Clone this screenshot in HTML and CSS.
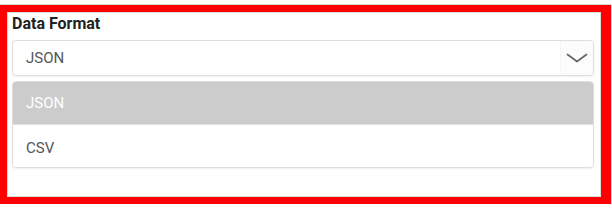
FILE: index.html
```html
<!DOCTYPE html>
<html lang="en">
<head>
    <meta charset="UTF-8">
    <meta name="viewport" content="width=device-width, initial-scale=1.0">
    <title>Data Format</title>
    <link rel="stylesheet" href="styles.css">
</head>
<body>
    <div class="frame">
        <!-- 字段标签 -->
        <label class="field-label">Data Format</label>

        <!-- 下拉框 -->
        <div class="select-box">
            <span class="select-value">JSON</span>
            <span class="select-toggle">
                <svg width="22" height="10" viewBox="0 0 22 10">
                    <polyline points="1.5,1.5 11,8.5 20.5,1.5" fill="none" stroke="#6a6a6a" stroke-width="1.8" stroke-linecap="round" stroke-linejoin="round"/>
                </svg>
            </span>
        </div>

        <!-- 选项列表 -->
        <ul class="option-list">
            <li class="option selected">JSON</li>
            <li class="option">CSV</li>
        </ul>
    </div>
</body>
</html>
```

FILE: styles.css
```css
* {
    box-sizing: border-box;
}
body {
    margin: 0;
    background-color: #fff;
    font-family: Roboto, "Liberation Sans", Arial, sans-serif;
    color: #333;
}

/* 红色外框 */
.frame {
    margin-top: 5px;
    width: 611px;
    height: 199px;
    border: 7px solid #ff0000;
    border-right-width: 10px;
    box-shadow: 0 0 0 1px #d6d6d6, inset 0 0 0 1px #dcdcdc;
    padding: 2px 7px 0 5px;
    display: flex;
    flex-direction: column;
}

.field-label {
    font-size: 16px;
    font-weight: bold;
    line-height: 19px;
    color: #222;
    margin-bottom: 7px;
}

/* 下拉框 */
.select-box {
    height: 36px;
    border: 1px solid #dedede;
    border-radius: 4px;
    display: flex;
    align-items: stretch;
    box-shadow: 0 1px 2px rgba(0, 0, 0, 0.06);
}
.select-value {
    flex-grow: 1;
    padding-left: 13px;
    display: flex;
    align-items: center;
    font-size: 15px;
    color: #555;
}
.select-toggle {
    width: 33px;
    display: flex;
    align-items: center;
    justify-content: center;
    border-left: 1px solid #f6f6f6;
    background-color: #fcfcfc;
    border-radius: 0 4px 4px 0;
}

/* 选项列表 */
.option-list {
    list-style: none;
    margin: 5px 0 0 0;
    padding: 0;
    border: 1px solid #dedede;
    border-radius: 4px;
    overflow: hidden;
    box-shadow: 0 1px 2px rgba(0, 0, 0, 0.06);
}
.option {
    height: 42px;
    padding: 3px 0 0 13px;
    display: flex;
    align-items: center;
    font-size: 15px;
    color: #555;
    background-color: #fff;
}
.option.selected {
    background-color: #cccccc;
    color: #fff;
    border-bottom: 1px solid #e2e2e2;
    height: 43px;
    padding-top: 0;
}
```
